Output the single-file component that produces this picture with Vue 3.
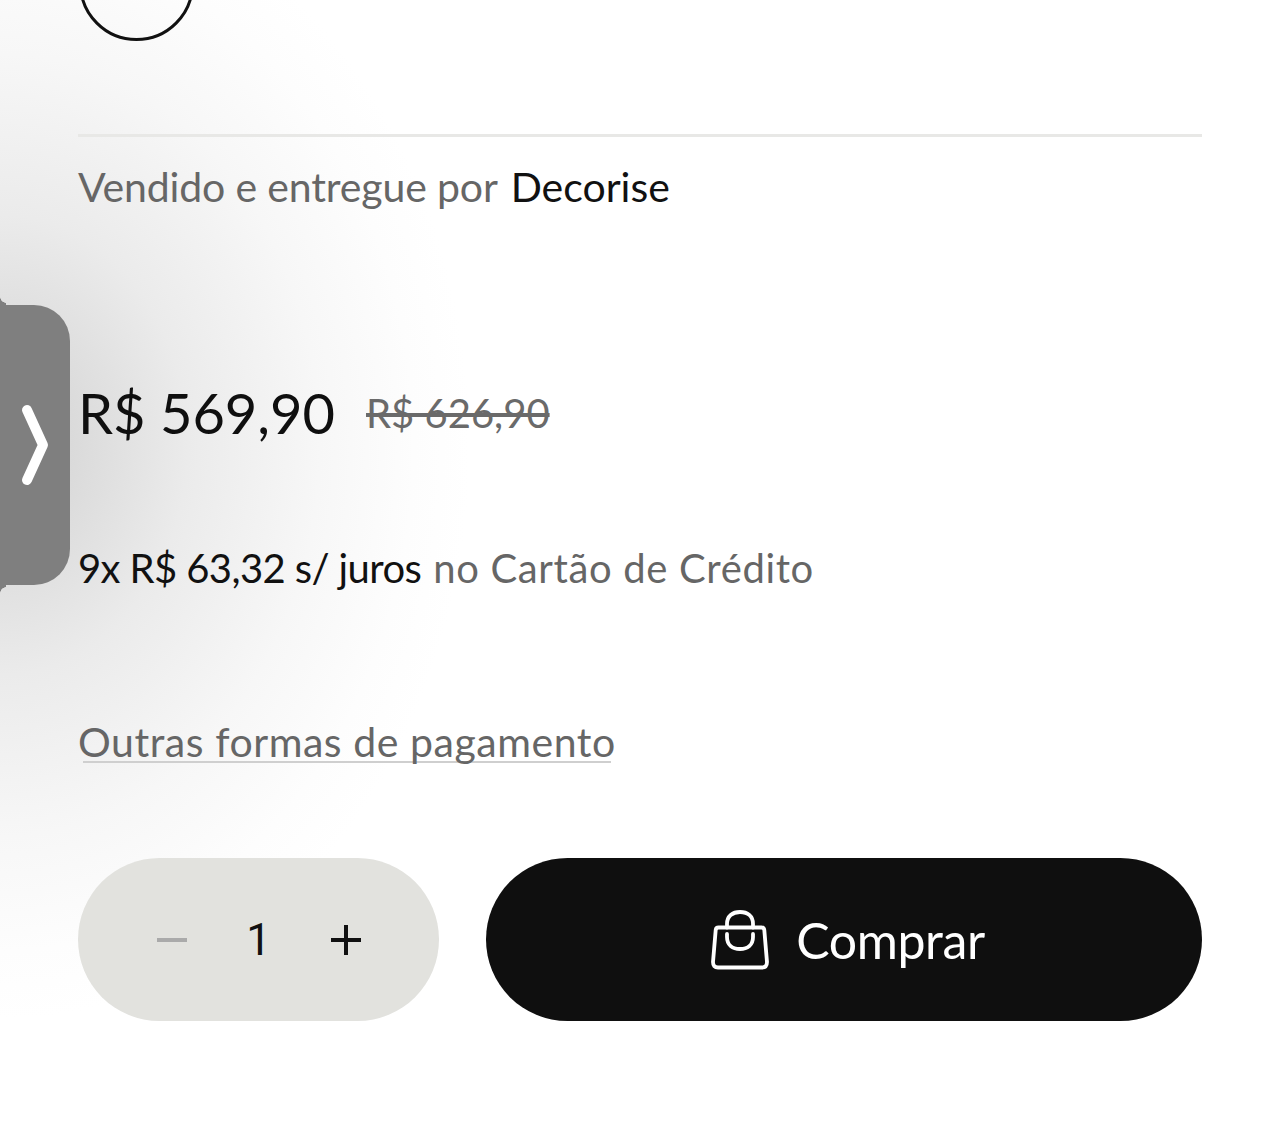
<template>
  <div class="page">
    <div class="glow"></div>

    <button class="side-tab" aria-label="Abrir">
      <svg width="30" height="84" viewBox="0 0 30 84" fill="none">
        <path d="M7 7 L23 42 L7 77" stroke="#fff" stroke-width="10" stroke-linecap="round" stroke-linejoin="round" />
      </svg>
    </button>

    <div class="content">
      <div class="swatch"></div>
      <hr class="divider" />

      <p class="seller">
        <span class="muted">Vendido e entregue por</span>
        <span class="seller-name">Decorise</span>
      </p>

      <div class="prices">
        <span class="price">{{ price }}</span>
        <span class="old-price">{{ oldPrice }}</span>
      </div>

      <p class="installments">
        <span class="strong">9x R$ 63,32 s/ juros</span>
        <span class="muted spaced">no Cartão de Crédito</span>
      </p>

      <a class="other-payments">Outras formas de pagamento</a>

      <div class="actions">
        <div class="qty">
          <span class="qty-btn minus"></span>
          <span class="qty-value">{{ qty }}</span>
          <span class="qty-btn plus"></span>
        </div>
        <button class="buy">
          <svg width="58" height="60" viewBox="0 0 58 60" fill="none" stroke="#fff" stroke-width="3.800" stroke-linecap="round" stroke-linejoin="round">
            <path d="M7.500 17.500 H50.500 Q53 17.500 53.300 20 L56 52 Q56 57.500 51 57.500 H7 Q2 57.500 2 52 L4.700 20 Q5 17.500 7.500 17.500 Z" />
            <path d="M16 17.500 V14 C16 6 21.500 2 29 2 C36.500 2 42 6 42 14 V17.500" />
            <path d="M16 24 V27 C16 35 21.500 39 29 39 C36.500 39 42 35 42 27 V24" />
          </svg>
          <span class="buy-label">Comprar</span>
        </button>
      </div>
    </div>
  </div>
</template>

<script setup>
import { ref } from 'vue'

const price = 'R$ 569,90'
const oldPrice = 'R$ 626,90'
const qty = ref(1)
</script>

<style>
html,
body {
  margin: 0;
  background: #fff;
}
</style>

<style scoped>
.page {
  position: relative;
  width: 1280px;
  height: 1139px;
  overflow: hidden;
  background: #fff;
  font-family: Lato, "Liberation Sans", sans-serif;
}

.glow {
  position: absolute;
  left: -470px;
  top: -130px;
  width: 940px;
  height: 1150px;
  background: radial-gradient(closest-side, #cdcdcd 0%, #dadada 15%, #ebebeb 40%, #f7f7f7 68%, #fdfdfd 88%, rgba(255, 255, 255, 0) 100%);
}

.side-tab {
  position: absolute;
  left: 0;
  top: 305px;
  width: 70px;
  height: 280px;
  padding: 0 0 0 20px;
  border: 0;
  border-radius: 0 36px 36px 0;
  background: #7f7f7f;
  display: flex;
  align-items: center;
}

.side-tab::before,
.side-tab::after {
  content: "";
  position: absolute;
  left: 0;
  width: 6px;
  height: 8px;
}

.side-tab::before {
  top: -8px;
  background: radial-gradient(circle at 6px 0, transparent 5.500px, #7f7f7f 6px);
}

.side-tab::after {
  bottom: -8px;
  background: radial-gradient(circle at 6px 8px, transparent 5.500px, #7f7f7f 6px);
}

.content {
  position: relative;
  padding: 0 78px;
}

.swatch {
  width: 109px;
  height: 109px;
  margin: -74px 0 0 1px;
  border: 3px solid #111;
  border-radius: 50%;
}

.divider {
  height: 3px;
  margin: 93px 0 0;
  border: 0;
  background: #e8e8e6;
}

.seller {
  display: flex;
  gap: 13px;
  margin: 25px 0 0;
  font-size: 41px;
  line-height: 50px;
  letter-spacing: -0.15px;
}

.muted {
  color: #666;
}

.seller-name {
  color: #111;
  letter-spacing: 0;
}

.prices {
  display: flex;
  align-items: center;
  gap: 31px;
  margin-top: 166px;
}

.price {
  color: #0f0f0f;
  font-size: 56px;
  line-height: 70px;
}

.old-price {
  color: #6a6a6a;
  font-size: 40px;
  text-decoration: line-through;
}

.installments {
  display: flex;
  gap: 12px;
  margin: 95px 0 0;
  font-size: 40px;
  line-height: 50px;
}

.strong {
  color: #111;
  letter-spacing: -0.6px;
}

.spaced {
  letter-spacing: 0.65px;
}

.other-payments {
  display: block;
  width: max-content;
  margin-top: 128px;
  color: #666;
  font-size: 41px;
  line-height: 42px;
  letter-spacing: 0.55px;
  background: linear-gradient(#cfcfcf, #cfcfcf) center bottom / calc(100% - 10px) 2px no-repeat;
}

.actions {
  display: flex;
  gap: 47px;
  margin-top: 95px;
}

.qty {
  width: 361px;
  height: 163px;
  border-radius: 82px;
  background: #e2e2de;
  display: flex;
  align-items: center;
  justify-content: center;
  gap: 56px;
}

.qty-value {
  width: 32px;
  text-align: center;
  color: #111;
  font-family: Roboto, sans-serif;
  font-size: 44px;
}

.qty-btn {
  position: relative;
  width: 30px;
  height: 30px;
}

.qty-btn::before {
  content: "";
  position: absolute;
  left: 0;
  right: 0;
  top: 13px;
  height: 4px;
  background: #111;
}

.minus::before {
  background: #aaa;
}

.plus::after {
  content: "";
  position: absolute;
  top: 0;
  bottom: 0;
  left: 13px;
  width: 4px;
  background: #111;
}

.buy {
  flex: 1;
  height: 163px;
  padding: 0 0 0 8px;
  border: 0;
  border-radius: 82px;
  background: #0f0f0f;
  color: #fff;
  font: inherit;
  font-size: 50px;
  display: flex;
  align-items: center;
  justify-content: center;
  gap: 27px;
}

.buy-label {
  letter-spacing: -0.4px;
}
</style>
